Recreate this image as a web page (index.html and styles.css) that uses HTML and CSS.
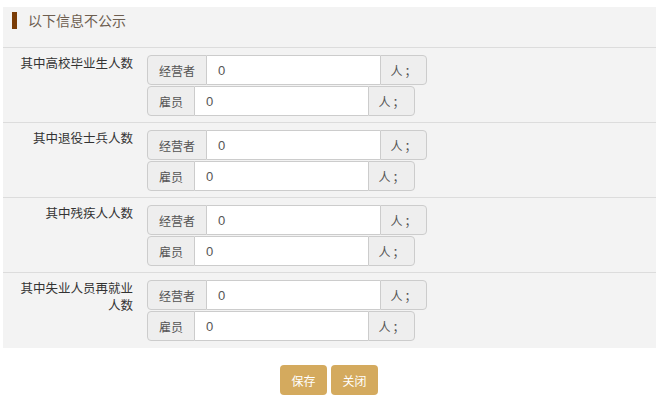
FILE: index.html
```html
<!DOCTYPE html>
<html lang="zh-CN">
<head>
  <meta charset="UTF-8" />
  <title>以下信息不公示</title>
  <link rel="stylesheet" href="styles.css">
</head>
<body>

  <div class="panel">
    <div class="panel-title"><span class="mark"></span>以下信息不公示</div>

    <!-- 高校毕业生 -->
    <div class="row">
      <div class="label">其中高校毕业生人数</div>
      <div class="fields">
        <div class="group">
          <span class="addon">经营者</span>
          <input type="text" value="0" />
          <span class="addon unit">人；</span>
        </div>
        <div class="group">
          <span class="addon">雇员</span>
          <input type="text" value="0" />
          <span class="addon unit">人；</span>
        </div>
      </div>
    </div>

    <!-- 退役士兵 -->
    <div class="row">
      <div class="label">其中退役士兵人数</div>
      <div class="fields">
        <div class="group">
          <span class="addon">经营者</span>
          <input type="text" value="0" />
          <span class="addon unit">人；</span>
        </div>
        <div class="group">
          <span class="addon">雇员</span>
          <input type="text" value="0" />
          <span class="addon unit">人；</span>
        </div>
      </div>
    </div>

    <!-- 残疾人 -->
    <div class="row">
      <div class="label">其中残疾人人数</div>
      <div class="fields">
        <div class="group">
          <span class="addon">经营者</span>
          <input type="text" value="0" />
          <span class="addon unit">人；</span>
        </div>
        <div class="group">
          <span class="addon">雇员</span>
          <input type="text" value="0" />
          <span class="addon unit">人；</span>
        </div>
      </div>
    </div>

    <!-- 失业人员再就业 -->
    <div class="row">
      <div class="label">其中失业人员再就业人数</div>
      <div class="fields">
        <div class="group">
          <span class="addon">经营者</span>
          <input type="text" value="0" />
          <span class="addon unit">人；</span>
        </div>
        <div class="group">
          <span class="addon">雇员</span>
          <input type="text" value="0" />
          <span class="addon unit">人；</span>
        </div>
      </div>
    </div>
  </div>

  <div class="actions">
    <button class="btn">保存</button>
    <button class="btn">关闭</button>
  </div>

</body>
</html>
```

FILE: styles.css
```css
body {
  margin: 0;
  padding: 7px 4px 0 3px;
  font-family: "Liberation Sans", "Noto Sans CJK SC", sans-serif;
  font-size: 12px;
  color: #333;
  background: #fff;
}

.panel {
  background: #f3f3f3;
  padding-bottom: 1px;
}

.panel-title {
  display: flex;
  align-items: center;
  height: 41px;
  padding-left: 9px;
  padding-bottom: 14px;
  font-size: 14px;
  color: #6d5e50;
  border-bottom: 1px solid #dcdcdc;
  box-sizing: border-box;
}

.mark {
  width: 5px;
  height: 17px;
  background: #7a3c06;
  margin-right: 11px;
}

.row {
  display: flex;
  padding: 7px 0 6px;
  border-bottom: 1px solid #dcdcdc;
}

.row:last-child {
  border-bottom: none;
}

.label {
  width: 116px;
  margin-left: 14px;
  text-align: right;
  font-size: 12.5px;
  line-height: 17px;
  padding-top: 1px;
  color: #333;
}

.fields {
  margin-left: 14px;
  display: flex;
  flex-direction: column;
  gap: 1px;
}

.group {
  display: flex;
  height: 30px;
}

.addon {
  display: flex;
  align-items: center;
  padding: 0 11px;
  background: #eee;
  border: 1px solid #ccc;
  border-radius: 4px 0 0 4px;
  color: #555;
}

.addon.unit {
  width: 47px;
  box-sizing: border-box;
  justify-content: center;
  border-radius: 0 4px 4px 0;
  padding: 0 0 0 2px;
  letter-spacing: 2px;
}

input {
  width: 173px;
  box-sizing: border-box;
  height: 30px;
  border: 1px solid #ccc;
  border-left: none;
  border-right: none;
  padding: 0 11px;
  font-family: "Liberation Sans", sans-serif;
  font-size: 13px;
  color: #555;
  outline: none;
  background: #fff;
}

.actions {
  display: flex;
  justify-content: center;
  gap: 4px;
  margin-top: 17px;
  padding-right: 1px;
}

.btn {
  width: 47px;
  height: 30px;
  border: none;
  border-radius: 4px;
  background: #d4aa5e;
  color: #fff;
  font-family: "Noto Sans CJK SC", sans-serif;
  font-size: 12px;
  cursor: pointer;
  padding: 0;
}
```
